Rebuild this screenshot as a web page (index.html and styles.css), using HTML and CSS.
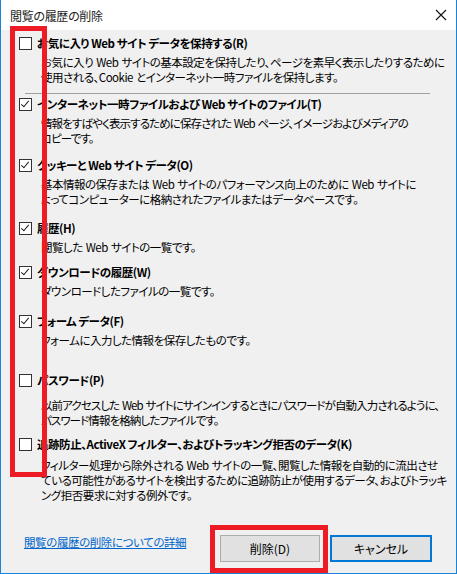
FILE: index.html
```html
<!DOCTYPE html>
<html lang="ja">
<head>
<meta charset="UTF-8">
<meta name="viewport" content="width=device-width, initial-scale=1.0">
<title>閲覧の履歴の削除</title>
<link rel="stylesheet" href="styles.css">
</head>
<body>
<div class="window">
    <div class="titlebar">
        <span class="title">閲覧の履歴の削除</span>
        <svg class="close" width="12" height="12" viewBox="0 0 12 12">
            <path d="M1 1 L11 11 M11 1 L1 11" stroke="#111" stroke-width="1.1" fill="none"/>
        </svg>
    </div>

    <div class="content">
        <div class="options">
            <div class="item item-first">
                <div class="item-title"><span class="box"></span>お気に入り Web サイト データを保持する(R)</div>
                <div class="item-desc">お気に入り Web サイトの基本設定を保持したり、ページを素早く表示したりするために<br>使用される、Cookie とインターネット一時ファイルを保持します。</div>
            </div>
            <div class="separator"></div>
            <div class="item">
                <div class="item-title"><span class="box checked"></span>インターネット一時ファイルおよび Web サイトのファイル(T)</div>
                <div class="item-desc tight">情報をすばやく表示するために保存された Web ページ、イメージおよびメディアの<br>コピーです。</div>
            </div>
            <div class="item gap-11">
                <div class="item-title"><span class="box checked"></span>クッキーと Web サイト データ(O)</div>
                <div class="item-desc">基本情報の保存または Web サイトのパフォーマンス向上のために Web サイトに<br>よってコンピューターに格納されたファイルまたはデータベースです。</div>
            </div>
            <div class="item gap-13">
                <div class="item-title"><span class="box checked"></span>履歴(H)</div>
                <div class="item-desc">閲覧した Web サイトの一覧です。</div>
            </div>
            <div class="item gap-9">
                <div class="item-title"><span class="box checked"></span>ダウンロードの履歴(W)</div>
                <div class="item-desc">ダウンロードしたファイルの一覧です。</div>
            </div>
            <div class="item gap-14">
                <div class="item-title"><span class="box checked"></span>フォーム データ(F)</div>
                <div class="item-desc">フォームに入力した情報を保存したものです。</div>
            </div>
            <div class="item gap-24">
                <div class="item-title"><span class="box"></span>パスワード(P)</div>
                <div class="item-desc desc-low tight">以前アクセスした Web サイトにサインインするときにパスワードが自動入力されるように、<br>パスワード情報を格納したファイルです。</div>
            </div>
            <div class="item gap-8">
                <div class="item-title"><span class="box"></span>追跡防止、ActiveX フィルター、およびトラッキング拒否のデータ(K)</div>
                <div class="item-desc desc-mid">フィルター処理から除外される Web サイトの一覧、閲覧した情報を自動的に流出させ<br>ている可能性があるサイトを検出するために追跡防止が使用するデータ、およびトラッキ<br>ング拒否要求に対する例外です。</div>
            </div>
        </div>

        <div class="footer">
            <a class="more-link" href="#">閲覧の履歴の削除についての詳細</a>
            <div class="buttons">
                <button class="btn">削除(D)</button>
                <button class="btn btn-default">キャンセル</button>
            </div>
        </div>
    </div>

    <!-- red annotation frames -->
    <div class="mark mark-boxes"></div>
    <div class="mark mark-delete"></div>
</div>
</body>
</html>
```

FILE: styles.css
```css
body {
    margin: 0;
    font-family: "Noto Sans CJK JP", "Noto Sans", sans-serif;
    font-size: 12px;
    color: #000;
    background-color: #fff;
}

.window {
    position: relative;
    width: 457px;
    height: 574px;
    box-sizing: border-box;
    border: 1px solid #1883d7;
    border-top: none;
    display: flex;
    flex-direction: column;
    overflow: hidden;
}

.titlebar {
    height: 30px;
    background-color: #fff;
    display: flex;
    align-items: center;
    justify-content: space-between;
    padding: 0 9px 0 9px;
}

.title {
    color: #1a1a1a;
    font-size: 12px;
    letter-spacing: -0.3px;
    font-feature-settings: "palt";
}

.close {
    display: block;
}

.content {
    flex: 1;
    background-color: #f0f0f0;
    display: flex;
    flex-direction: column;
    padding: 5px 0 0 18px;
}

.options {
    display: flex;
    flex-direction: column;
}

.item-title {
    height: 16px;
    line-height: 16px;
    font-size: 11.5px;
    letter-spacing: -0.45px;
    font-weight: bold;
    display: flex;
    align-items: center;
    gap: 5px;
    font-feature-settings: "palt";
    white-space: nowrap;
}

.item-desc {
    margin-top: 4px;
    padding-left: 22px;
    line-height: 15px;
    font-size: 11.5px;
    letter-spacing: -0.5px;
    word-spacing: 1px;
    font-feature-settings: "palt";
    white-space: nowrap;
}

.item-desc.tight {
    letter-spacing: -0.9px;
}

.desc-low {
    margin-top: 10px;
}

.desc-mid {
    margin-top: 6px;
}

.box {
    width: 13px;
    height: 13px;
    box-sizing: border-box;
    border: 1px solid #333;
    background-color: #fff;
    flex-shrink: 0;
    position: relative;
}

.box.checked::after {
    content: "";
    position: absolute;
    left: 3px;
    top: 0px;
    width: 3px;
    height: 7px;
    border-right: 1.2px solid #222;
    border-bottom: 1.2px solid #222;
    transform: rotate(40deg);
}

.separator {
    height: 1px;
    margin: 8px 26px 2px 6px;
    background-color: #a0a0a0;
}

.gap-8 { margin-top: 8px; }
.gap-9 { margin-top: 9px; }
.gap-11 { margin-top: 11px; }
.gap-13 { margin-top: 13px; }
.gap-14 { margin-top: 14px; }
.gap-24 { margin-top: 24px; }

.footer {
    margin-top: auto;
    display: flex;
    align-items: center;
    justify-content: space-between;
    padding: 0 24px 11px 5px;
}

.more-link {
    color: #0066cc;
    text-decoration: underline;
    font-size: 11.5px;
    letter-spacing: -0.4px;
    margin-bottom: 12px;
    font-feature-settings: "palt";
}

.buttons {
    display: flex;
    gap: 10px;
}

.btn {
    width: 100px;
    height: 27px;
    font-family: inherit;
    font-size: 12px;
    color: #000;
    background-color: #e1e1e1;
    border: 1px solid #adadad;
    font-feature-settings: "palt";
}

.btn-default {
    width: 102px;
    border: 2px solid #0078d7;
}

.mark {
    position: absolute;
    border: 5px solid #ed1c24;
    box-sizing: border-box;
}

.mark-boxes {
    left: 9px;
    top: 26px;
    width: 37px;
    height: 451px;
}

.mark-delete {
    left: 209px;
    top: 525px;
    width: 118px;
    height: 48px;
}
```
